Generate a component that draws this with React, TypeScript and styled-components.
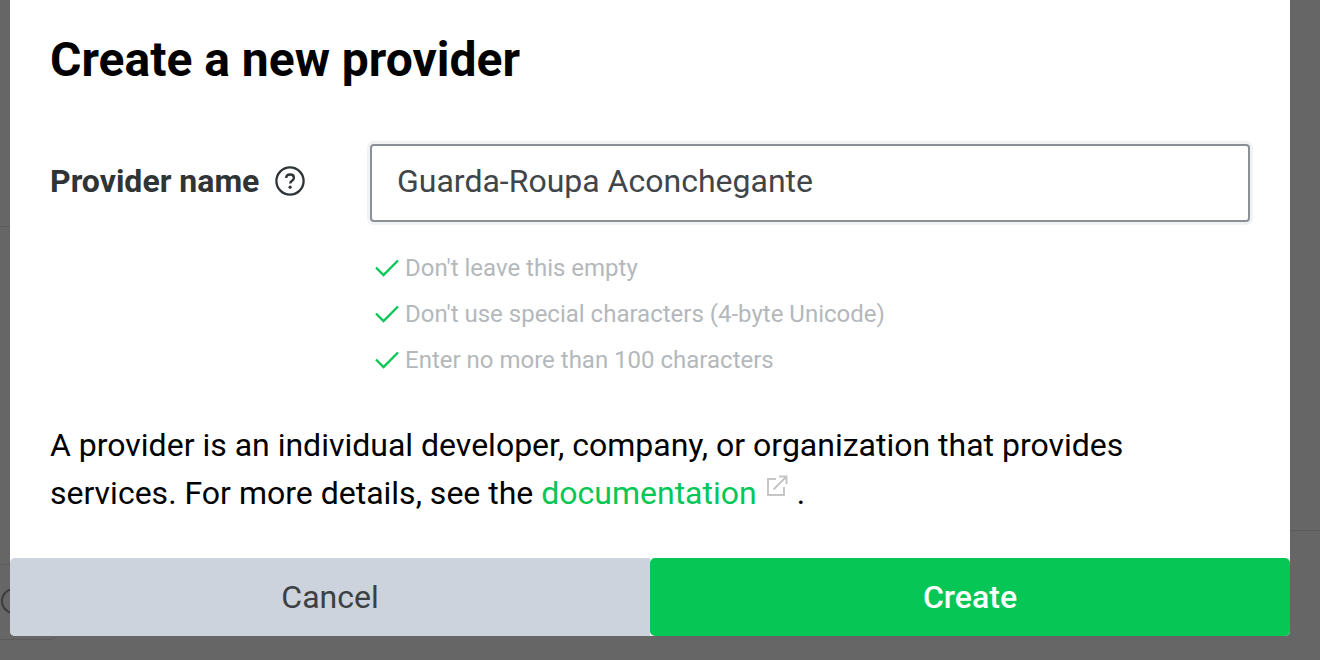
import React from 'react';
import styled, { createGlobalStyle } from 'styled-components';

const GlobalStyle = createGlobalStyle`
  html, body {
    margin: 0;
    padding: 0;
    height: 660px;
    overflow: hidden;
    background: #666666;
    font-family: Roboto, "Liberation Sans", sans-serif;
  }
`;

const App = () => {
	return (
		<Page>
			<GlobalStyle/>
			<LeftLine/>
			<RightLine/>
			<BehindBox><BehindCircle/></BehindBox>
			<Modal>
				<Content>
					<Title>Create a new provider</Title>
					<FormRow>
						<LabelBox>
							<Label>Provider name</Label>
							<HelpIcon viewBox="0 0 30 30" aria-hidden>
								<circle cx="15" cy="15" r="13.6" fill="none" stroke="#2f3437" strokeWidth="2.3"/>
								<path d="M11.2 12.1c0-2.2 1.7-3.6 3.9-3.6 2.2 0 3.8 1.3 3.8 3.2 0 1.6-.9 2.4-2.1 3.2-1.1.7-1.6 1.3-1.6 2.6" fill="none" stroke="#2f3437" strokeWidth="2.4"/>
								<circle cx="15.1" cy="21.2" r="1.6" fill="#2f3437"/>
							</HelpIcon>
						</LabelBox>
						<Field>
							<NameInput readOnly value="Guarda-Roupa Aconchegante"/>
							<Rules>
								<Rule><Check/>Don't leave this empty</Rule>
								<Rule><Check/>Don't use special characters (4-byte Unicode)</Rule>
								<Rule><Check/>Enter no more than 100 characters</Rule>
							</Rules>
						</Field>
					</FormRow>
					<Description>
						A provider is an individual developer, company, or organization that provides<br/>
						services. For more details, see the <DocLink href="#">documentation</DocLink>
						<ExternalIcon viewBox="0 0 22 22" aria-hidden>
							<path d="M10 4H2v16h16v-8" fill="none" stroke="#c4c6c8" strokeWidth="2"/>
							<path d="M7.5 14.5 20 2M13 1.5h7.5V9" fill="none" stroke="#c4c6c8" strokeWidth="2"/>
						</ExternalIcon>
						<Dot>.</Dot>
					</Description>
				</Content>
				<Footer>
					<CancelButton>Cancel</CancelButton>
					<CreateButton>Create</CreateButton>
				</Footer>
			</Modal>
		</Page>
	);
};

export default App;

const Check = () => (
	<CheckIcon viewBox="0 0 24 18" aria-hidden>
		<path d="M1 8.5 8.5 16 23 1.5" fill="none" stroke="#06c755" strokeWidth="2.3"/>
	</CheckIcon>
);

const Page = styled.div`
  position: relative;
  width: 1320px;
  height: 660px;
  background: #666666;
  overflow: hidden;
`;

const LeftLine = styled.div`
  position: absolute;
  left: 0;
  top: 226px;
  width: 10px;
  height: 1px;
  background: #5b5b5b;
`;

const RightLine = styled.div`
  position: absolute;
  left: 1290px;
  top: 530px;
  width: 30px;
  height: 1px;
  background: #5b5b5b;
`;

const BehindBox = styled.div`
  position: absolute;
  left: -20px;
  top: 564px;
  width: 75px;
  height: 76px;
  border: 1px solid #5b5b5b;
  border-radius: 4px;
  box-sizing: border-box;
`;

const BehindCircle = styled.div`
  position: absolute;
  left: 20px;
  top: 23px;
  width: 22px;
  height: 22px;
  border: 2px solid #3a3c3e;
  border-radius: 50%;
`;

const Modal = styled.div`
  position: absolute;
  left: 10px;
  top: 0;
  width: 1280px;
  height: 636px;
  display: flex;
  flex-direction: column;
  background: #ffffff;
  border-radius: 0 0 5px 5px;
  box-sizing: border-box;
`;

const Content = styled.div`
  flex: 1;
  padding: 0 40px;
`;

const Title = styled.h1`
  margin: 0;
  padding-top: 33px;
  font-size: 48px;
  line-height: 54px;
  font-weight: 700;
  color: #000000;
`;

const FormRow = styled.div`
  display: flex;
  margin-top: 57px;
`;

const LabelBox = styled.div`
  width: 320px;
  height: 73px;
  display: flex;
  align-items: center;
  gap: 16px;
`;

const Label = styled.span`
  font-size: 32px;
  font-weight: 700;
  color: #2f3437;
`;

const HelpIcon = styled.svg`
  width: 30px;
  height: 30px;
`;

const Field = styled.div`
  width: 880px;
`;

const NameInput = styled.input`
  display: block;
  width: 100%;
  height: 78px;
  box-sizing: border-box;
  padding: 0 26px 5px 25px;
  border: 2px solid #8b9097;
  border-radius: 4px;
  box-shadow: 0 0 0 3px #f0f2f4;
  outline: none;
  background: #ffffff;
  font-family: Roboto, "Liberation Sans", sans-serif;
  font-size: 32px;
  color: #3f4548;
`;

const Rules = styled.ul`
  list-style: none;
  margin: 23px 0 0;
  padding: 0 0 0 5px;
`;

const Rule = styled.li`
  display: flex;
  align-items: center;
  gap: 6px;
  height: 46px;
  font-size: 24px;
  color: #b4b8bb;
`;

const CheckIcon = styled.svg`
  width: 24px;
  height: 18px;
`;

const Description = styled.p`
  margin: 38px 0 0;
  font-size: 32px;
  line-height: 48px;
  color: #000000;
`;

const DocLink = styled.a`
  color: #06c755;
  text-decoration: none;
`;

const ExternalIcon = styled.svg`
  width: 22px;
  height: 22px;
  margin-left: 9px;
  vertical-align: 7px;
`;

const Dot = styled.span`
  margin-left: 9px;
`;

const Footer = styled.div`
  display: flex;
  height: 78px;
`;

const FooterButton = styled.button`
  flex: 1;
  border: none;
  font-family: Roboto, "Liberation Sans", sans-serif;
  font-size: 32px;
  padding: 0;
`;

const CancelButton = styled(FooterButton)`
  background: #cdd3dc;
  color: #3b4043;
  border-radius: 5px 0 0 5px;
`;

const CreateButton = styled(FooterButton)`
  background: #06c755;
  color: #ffffff;
  font-weight: 500;
  border-radius: 5px;
`;
